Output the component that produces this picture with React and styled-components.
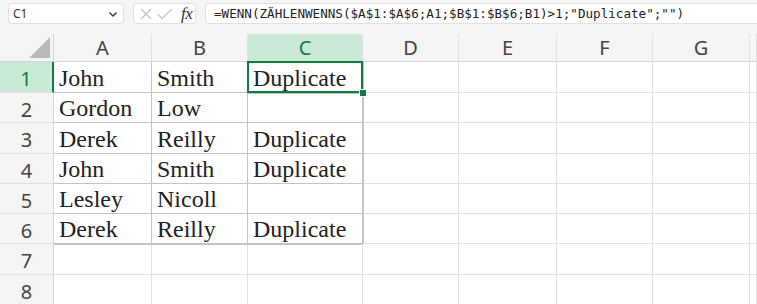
import React from 'react';
import styled, { createGlobalStyle } from 'styled-components';

const GlobalStyle = createGlobalStyle`
    html, body {
        margin: 0;
        padding: 0;
        background: #f5f5f5;
        overflow: hidden;
    }
`;

const Page = styled.div`
    width: 757px;
    height: 304px;
    overflow: hidden;
    background: #f5f5f5;
`;

const FormulaBar = styled.div`
    display: flex;
    align-items: flex-start;
    gap: 9px;
    height: 34px;
    padding: 3px 0 0 8px;
    box-sizing: border-box;
`;

const Box = styled.div`
    display: flex;
    align-items: center;
    height: 21px;
    box-sizing: border-box;
    background: #fff;
    border: 1px solid #e1e1e1;
    border-radius: 4px;
    flex: ${p => p.$grow ? '1' : 'none'};
    width: ${p => p.$width ? `${p.$width}px` : 'auto'};
    margin-right: ${p => p.$grow ? '-20px' : '0'};
`;

const NameBox = styled(Box)`
    justify-content: space-between;
    padding: 0 4px 0 4px;
    font-family: "Noto Sans", "Open Sans", sans-serif;
    font-size: 12px;
    color: #333;
`;

const FxBox = styled(Box)`
    padding: 0 0 0 6px;
    gap: 5px;
`;

const FxLabel = styled.span`
    font-family: "Liberation Serif", serif;
    font-style: italic;
    font-size: 17px;
    color: #333;
    margin-left: 3px;
    letter-spacing: -0.5px;
`;

const FormulaText = styled.span`
    font-family: "DejaVu Sans Mono", monospace;
    font-size: 12.6px;
    color: #222;
    padding-left: 8px;
    white-space: nowrap;
`;

const Sheet = styled.div`
    display: grid;
    grid-template-columns: 54px 98px 96px 115px 96px 98px 96px 97px 1fr;
`;

const Corner = styled.div`
    height: 28px;
    border-right: 1px solid #d4d4d4;
    border-bottom: 1px solid #d4d4d4;
    box-sizing: border-box;
    display: flex;
    align-items: flex-end;
    justify-content: flex-end;
    padding: 0 3px 3px 0;
`;

const ColHead = styled.div`
    height: 28px;
    box-sizing: border-box;
    display: flex;
    align-items: center;
    justify-content: center;
    font-family: "Noto Sans", "Open Sans", sans-serif;
    font-size: 20px;
    color: ${p => p.$active ? '#107c41' : '#444'};
    background: ${p => p.$active ? '#caead7' : 'transparent'};
    border-right: 1px solid #e1e1e1;
    border-bottom: 1px solid ${p => p.$active ? '#107c41' : '#d4d4d4'};
    padding-bottom: 1px;
`;

const RowHead = styled.div`
    height: ${p => p.$h}px;
    box-sizing: border-box;
    display: flex;
    align-items: center;
    justify-content: center;
    padding-top: 3px;
    font-family: "Noto Sans", "Open Sans", sans-serif;
    font-size: 20px;
    color: ${p => p.$active ? '#107c41' : '#444'};
    background: ${p => p.$active ? '#caead7' : 'transparent'};
    border-right: ${p => p.$active ? '2px solid #107c41' : '1px solid #d4d4d4'};
    border-bottom: 1px solid #e1e1e1;
`;

const Cell = styled.div`
    height: ${p => p.$h}px;
    box-sizing: border-box;
    position: relative;
    background: #fff;
    display: flex;
    align-items: flex-end;
    padding: 0 0 0 5px;
    font-family: "Liberation Serif", "Times New Roman", serif;
    font-size: 24px;
    line-height: 27px;
    color: #222;
    white-space: nowrap;
    border-right: 1px solid ${p => p.$table ? '#c4c4c4' : '#e1e1e1'};
    border-bottom: 1px solid ${p => p.$table ? '#c4c4c4' : '#e1e1e1'};
    box-shadow: ${p => p.$table ? '1px 0 0 #c4c4c4, 0 1px 0 #c4c4c4' : 'none'};
    z-index: ${p => p.$selected ? 3 : p.$table ? 1 : 0};
`;

const Selection = styled.div`
    position: absolute;
    left: -1px;
    top: -1px;
    right: -1px;
    bottom: -1px;
    border: 2px solid #107c41;
    pointer-events: none;
`;

const FillHandle = styled.div`
    position: absolute;
    right: -6px;
    bottom: -6px;
    width: 6px;
    height: 6px;
    background: #107c41;
    border: 1px solid #fff;
`;

const columns = ['A', 'B', 'C', 'D', 'E', 'F', 'G', ''];
const rowHeights = [31, 30, 31, 30, 30, 30, 31, 30];
const data = [
    ['John', 'Smith', 'Duplicate'],
    ['Gordon', 'Low', ''],
    ['Derek', 'Reilly', 'Duplicate'],
    ['John', 'Smith', 'Duplicate'],
    ['Lesley', 'Nicoll', ''],
    ['Derek', 'Reilly', 'Duplicate'],
];

const Chevron = () => (
    <svg width="12" height="12" viewBox="0 0 12 12">
        <path d="M2.5 4.5 L6 8 L9.5 4.5" fill="none" stroke="#333" strokeWidth="1.3" />
    </svg>
);

const Cross = () => (
    <svg width="12" height="12" viewBox="0 0 12 12">
        <path d="M1 1 L11 11 M11 1 L1 11" stroke="#c2c2c2" strokeWidth="1.1" />
    </svg>
);

const Check = () => (
    <svg width="16" height="12" viewBox="0 0 16 12">
        <path d="M1 6.5 L5 10.5 L15 1" fill="none" stroke="#c2c2c2" strokeWidth="1.1" />
    </svg>
);

export default function App() {
    return (
        <Page>
            <GlobalStyle />
            <FormulaBar>
                <NameBox $width={116}>
                    <span>C1</span>
                    <Chevron />
                </NameBox>
                <FxBox $width={63}>
                    <Cross />
                    <Check />
                    <FxLabel>fx</FxLabel>
                </FxBox>
                <Box $grow>
                    <FormulaText>=WENN(ZÄHLENWENNS($A$1:$A$6;A1;$B$1:$B$6;B1)&gt;1;"Duplicate";"")</FormulaText>
                </Box>
            </FormulaBar>
            <Sheet>
                <Corner>
                    <svg width="21" height="21" viewBox="0 0 21 21">
                        <polygon points="21,0 21,21 0,21" fill="#b9b9b9" />
                    </svg>
                </Corner>
                {columns.map((c, i) => (
                    <ColHead key={i} $active={c === 'C'}>{c}</ColHead>
                ))}
                {rowHeights.map((h, r) => (
                    <React.Fragment key={r}>
                        <RowHead $h={h} $active={r === 0}>{r + 1}</RowHead>
                        {columns.map((c, ci) => {
                            const inTable = r < 6 && ci < 3;
                            const value = inTable ? data[r][ci] : '';
                            const selected = r === 0 && ci === 2;
                            return (
                                <Cell key={ci} $h={h} $table={inTable} $selected={selected}>
                                    {value}
                                    {selected && (
                                        <Selection>
                                            <FillHandle />
                                        </Selection>
                                    )}
                                </Cell>
                            );
                        })}
                    </React.Fragment>
                ))}
            </Sheet>
        </Page>
    );
}
